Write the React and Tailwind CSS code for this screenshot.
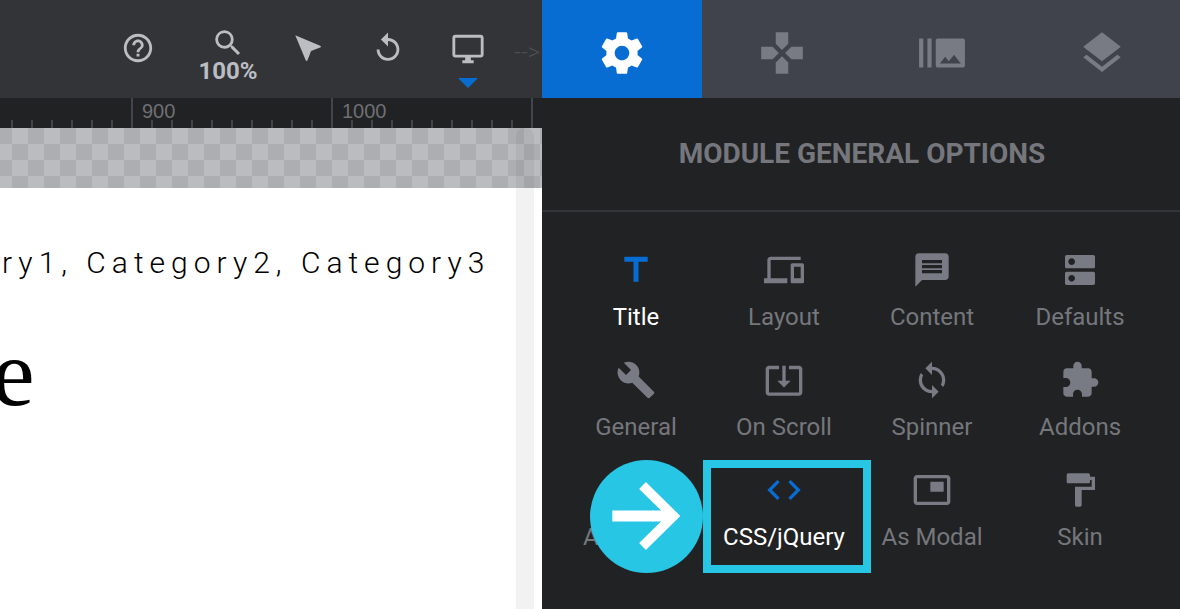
import React from "react";
import {
  MdHelpOutline, MdSearch, MdNearMe, MdReplay, MdGamepad, MdBurstMode, MdLayers,
  MdTitle, MdDevices, MdMessage, MdDns, MdBuild, MdSystemUpdateAlt, MdLoop, MdExtension, MdTune,
  MdCode, MdPictureInPicture, MdFormatPaint,
} from "react-icons/md";

function GearIcon({ size }) {
  return (
    <svg width={size} height={size} viewBox="0 0 24 24" fill="currentColor" aria-hidden="true">
      <path d="M19.43 12.98c.04-.32.07-.64.07-.98s-.03-.66-.07-.98l2.11-1.65c.19-.15.24-.42.12-.64l-2-3.46c-.12-.22-.39-.3-.61-.22l-2.49 1c-.52-.4-1.08-.73-1.69-.98l-.38-2.65C14.46 2.18 14.25 2 14 2h-4c-.25 0-.46.18-.49.42l-.38 2.65c-.61.25-1.17.59-1.69.98l-2.49-1c-.23-.09-.49 0-.61.22l-2 3.46c-.13.22-.07.49.12.64l2.11 1.65c-.04.32-.07.65-.07.98s.03.66.07.98l-2.11 1.65c-.19.15-.24.42-.12.64l2 3.46c.12.22.39.3.61.22l2.49-1c.52.4 1.08.73 1.69.98l.38 2.65c.03.24.24.42.49.42h4c.25 0 .46-.18.49-.42l.38-2.65c.61-.25 1.17-.59 1.69-.98l2.49 1c.23.09.49 0 .61-.22l2-3.46c.12-.22.07-.49-.12-.64l-2.11-1.65zM12 15.5c-1.93 0-3.5-1.57-3.5-3.5s1.57-3.5 3.5-3.5 3.5 1.57 3.5 3.5-1.57 3.5-3.5 3.5z" />
    </svg>
  );
}

function MonitorIcon({ size }) {
  return (
    <svg width={size} height={size} viewBox="0 0 24 24" fill="currentColor" aria-hidden="true">
      <path d="M21 2H3c-1.1 0-2 .9-2 2v12c0 1.1.9 2 2 2h7v2H8v2h8v-2h-2v-2h7c1.1 0 2-.9 2-2V4c0-1.1-.9-2-2-2zm0 14H3V4h18v12z" />
    </svg>
  );
}

const tabs = [
  { name: "Module general options", Icon: GearIcon, active: true },
  { name: "Navigation options", Icon: MdGamepad },
  { name: "Slide options", Icon: MdBurstMode },
  { name: "Layer options", Icon: MdLayers },
];

const options = [
  { label: "Title", Icon: MdTitle, active: true },
  { label: "Layout", Icon: MdDevices },
  { label: "Content", Icon: MdMessage },
  { label: "Defaults", Icon: MdDns },
  { label: "General", Icon: MdBuild },
  { label: "On Scroll", Icon: MdSystemUpdateAlt },
  { label: "Spinner", Icon: MdLoop },
  { label: "Addons", Icon: MdExtension },
  { label: "Advanced", Icon: MdTune },
  { label: "CSS/jQuery", Icon: MdCode, active: true, pointed: true },
  { label: "As Modal", Icon: MdPictureInPicture },
  { label: "Skin", Icon: MdFormatPaint },
];

const ticks = Array.from({ length: 27 }, (_, i) => 840 + i * 10);
const tickLabels = { 900: "900", 1000: "1000" };

function Toolbar() {
  return (
    <div className="flex h-[98px] items-start overflow-hidden bg-[#333438] pl-[98px] text-[#bcbdc2]">
      <button type="button" aria-label="Help" className="flex h-24 w-20 shrink-0 items-center justify-center">
        <MdHelpOutline size={34} />
      </button>
      <button type="button" className="flex h-24 w-[90px] shrink-0 flex-col items-center pt-[26px] pl-[10px]">
        <MdSearch size={34} />
        <span className="text-2xl leading-[22px] font-bold">100%</span>
      </button>
      <button type="button" aria-label="Select" className="flex h-24 w-20 shrink-0 items-center justify-center">
        <MdNearMe size={34} className="-scale-x-100" />
      </button>
      <button type="button" aria-label="Undo" className="flex h-24 w-20 shrink-0 items-center justify-center">
        <MdReplay size={34} />
      </button>
      <button type="button" aria-label="Desktop view" className="flex h-24 w-20 shrink-0 flex-col items-center gap-3 pt-8">
        <MonitorIcon size={34} />
        <svg width="20" height="10" viewBox="0 0 20 10" className="text-[#076dd3]" fill="currentColor" aria-hidden="true">
          <path d="M0 0h20L10 10z" />
        </svg>
      </button>
      <span className="pt-10 pl-1.5 text-2xl leading-6 font-light whitespace-nowrap text-[#4c4e52]">--&gt;</span>
    </div>
  );
}

function Ruler() {
  return (
    <div className="flex h-[30px] items-end overflow-hidden bg-[#212224] pl-[11px] font-['Liberation_Sans',sans-serif]">
      {ticks.map((t) =>
        t % 100 === 0 ? (
          <div key={t} className="h-full w-5 shrink-0 border-l-2 border-[#444549] pl-[9px] text-xl leading-[26px] whitespace-nowrap text-[#6e6f73]">
            {tickLabels[t]}
          </div>
        ) : (
          <div key={t} className="h-2 w-5 shrink-0 border-l-2 border-[#444549]" />
        )
      )}
    </div>
  );
}

function Option({ label, Icon, active, pointed }) {
  return (
    <div className="relative">
      <button type="button" className="flex h-[110px] w-full flex-col items-center gap-3 pt-[10px]">
        <Icon size={40} className={active ? "text-[#076dd3]" : "text-[#787b84]"} />
        <span className={`text-2xl leading-[30px] whitespace-nowrap ${active ? "text-white" : "text-[#75777c]"}`}>{label}</span>
      </button>
      {pointed && (
        <div className="pointer-events-none absolute top-0 -left-[120px] flex">
          <svg width="113" height="113" viewBox="0 0 113 113" fill="none" aria-hidden="true">
            <circle cx="56.5" cy="56.5" r="56.5" fill="#26c6e4" />
            <path d="M22.3 56H82" stroke="#fff" strokeWidth="10.8" />
            <path d="M52.5 25.5L83.5 56L52.5 86.5" stroke="#fff" strokeWidth="9.6" />
          </svg>
          <div className="h-[113px] w-[168px] border-8 border-[#26c6e4]" />
        </div>
      )}
    </div>
  );
}

export default function App() {
  return (
    <div className="flex min-h-screen overflow-hidden bg-[#212224] font-[Roboto,sans-serif]">
      <main className="flex min-w-0 flex-1 flex-col">
        <Toolbar />
        <Ruler />
        <div className="relative flex flex-1 flex-col bg-white text-black">
          <div className="h-[60px] bg-[#bbbcbe] bg-[conic-gradient(#adaeb1_25%,transparent_0_50%,#adaeb1_0_75%,transparent_0)] bg-size-[32px_32px] bg-position-[12px_0px]" />
          <div className="flex-1 overflow-hidden">
            <p className="pt-[57px] pl-0.5 text-[30px] leading-9 font-light tracking-[6px] whitespace-nowrap">
              ry1, Category2, Category3
            </p>
            <h1 className="-ml-2 pt-8 font-['Liberation_Serif',serif] text-[96px] leading-[120px]">e</h1>
          </div>
          <div className="absolute top-0 right-2 bottom-0 w-[18px] rounded-t-lg bg-black/5" />
        </div>
      </main>
      <aside className="flex w-[638px] shrink-0 flex-col">
        <nav className="flex h-[98px] overflow-hidden bg-[#40434b]">
          {tabs.map(({ name, Icon, active }) => (
            <button
              key={name}
              type="button"
              aria-label={name}
              className={`flex w-40 shrink-0 items-center justify-center pt-2 ${active ? "bg-[#076dd3] text-white" : "text-[#787b84]"}`}
            >
              <Icon size={50} />
            </button>
          ))}
        </nav>
        <h2 className="border-b-2 border-[#333538] py-10 pl-0.5 text-center text-[28px] leading-8 font-bold text-[#75777c]">
          MODULE GENERAL OPTIONS
        </h2>
        <div className="grid grid-cols-4 pt-7 pr-[26px] pl-5">
          {options.map((o) => (
            <Option key={o.label} {...o} />
          ))}
        </div>
      </aside>
    </div>
  );
}
